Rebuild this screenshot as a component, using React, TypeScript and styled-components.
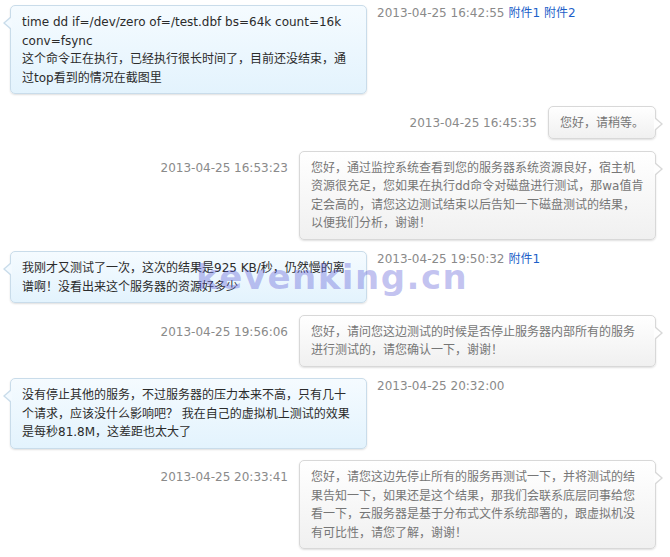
import React from 'react';
import styled, { createGlobalStyle, css } from 'styled-components';

const Global = createGlobalStyle`
  html, body { margin: 0; padding: 0; background: #fff; }
  body { font-family: "DejaVu Sans", "Noto Sans CJK SC", sans-serif; }
`;

type Side = 'left' | 'right';

interface Msg {
  side: Side;
  time: string;
  lines: string[];
  links?: string[];
  fit?: boolean;
}

const messages: Msg[] = [
  {
    side: 'left',
    time: '2013-04-25 16:42:55',
    links: ['附件1', '附件2'],
    lines: [
      'time dd if=/dev/zero of=/test.dbf bs=64k count=16k',
      'conv=fsync',
      '这个命令正在执行，已经执行很长时间了，目前还没结束，通',
      '过top看到的情况在截图里',
    ],
  },
  { side: 'right', time: '2013-04-25 16:45:35', fit: true, lines: ['您好，请稍等。'] },
  {
    side: 'right',
    time: '2013-04-25 16:53:23',
    lines: [
      '您好，通过监控系统查看到您的服务器系统资源良好，宿主机',
      '资源很充足，您如果在执行dd命令对磁盘进行测试，那wa值肯',
      '定会高的，请您这边测试结束以后告知一下磁盘测试的结果，',
      '以便我们分析，谢谢！',
    ],
  },
  {
    side: 'left',
    time: '2013-04-25 19:50:32',
    links: ['附件1'],
    lines: ['我刚才又测试了一次，这次的结果是925 KB/秒，仍然慢的离', '谱啊！没看出来这个服务器的资源好多少'],
  },
  {
    side: 'right',
    time: '2013-04-25 19:56:06',
    lines: ['您好，请问您这边测试的时候是否停止服务器内部所有的服务', '进行测试的，请您确认一下，谢谢！'],
  },
  {
    side: 'left',
    time: '2013-04-25 20:32:00',
    lines: [
      '没有停止其他的服务，不过服务器的压力本来不高，只有几十',
      '个请求，应该没什么影响吧？ 我在自己的虚拟机上测试的效果',
      '是每秒81.8M，这差距也太大了',
    ],
  },
  {
    side: 'right',
    time: '2013-04-25 20:33:41',
    lines: [
      '您好，请您这边先停止所有的服务再测试一下，并将测试的结',
      '果告知一下，如果还是这个结果，那我们会联系底层同事给您',
      '看一下，云服务器是基于分布式文件系统部署的，跟虚拟机没',
      '有可比性，请您了解，谢谢！',
    ],
  },
];

const Page = styled.div`
  position: relative;
  width: 670px;
  height: 557px;
  overflow: hidden;
  box-sizing: border-box;
  padding: 5px 14px 0 10px;
  display: flex;
  flex-direction: column;
  gap: 11.5px;
`;

const Row = styled.div<{ $side: Side }>`
  display: flex;
  align-items: flex-start;
  justify-content: ${(p) => (p.$side === 'left' ? 'flex-start' : 'flex-end')};
  gap: ${(p) => (p.$side === 'left' ? '10px' : '11px')};
`;

const Time = styled.div<{ $side: Side }>`
  font-size: 12px;
  line-height: 14px;
  color: #8a8a8a;
  white-space: nowrap;
  padding-top: ${(p) => (p.$side === 'left' ? '1px' : '10px')};
`;

const Attach = styled.a`
  color: #1d5fc9;
  text-decoration: none;
  margin-left: 4px;
  cursor: pointer;
`;

const leftStyle = css`
  color: #2b2b2b;
  border-color: #c9dcea;
  background: linear-gradient(to bottom, #f5fbff 0%, #e3f3fd 100%);
  &::before {
    left: -8px;
    border-width: 7px 8px 7px 0;
    border-color: transparent #c9dcea transparent transparent;
  }
  &::after {
    left: -6px;
    top: 11px;
    border-width: 6px 7px 6px 0;
    border-color: transparent #f3faff transparent transparent;
  }
`;

const rightStyle = css`
  color: #767676;
  border-color: #d8d8d8;
  background: linear-gradient(to bottom, #ffffff 0%, #f0f0f0 100%);
  &::before {
    right: -8px;
    border-width: 7px 0 7px 8px;
    border-color: transparent transparent transparent #d8d8d8;
  }
  &::after {
    right: -6px;
    top: 11px;
    border-width: 6px 0 6px 7px;
    border-color: transparent transparent transparent #fefefe;
  }
`;

const Bubble = styled.div<{ $side: Side; $fit?: boolean }>`
  position: relative;
  box-sizing: border-box;
  width: ${(p) => (p.$fit ? 'auto' : '357px')};
  padding: 7px 11px 6px;
  border: 1px solid;
  border-radius: 5px;
  box-shadow: 0 1px 2px rgba(0, 0, 0, 0.13);
  font-size: 12px;
  line-height: 18.5px;
  &::before,
  &::after {
    content: '';
    position: absolute;
    top: 10px;
    width: 0;
    height: 0;
    border-style: solid;
  }
  ${(p) => (p.$side === 'left' ? leftStyle : rightStyle)}
`;

const Line = styled.span`
  display: block;
  white-space: nowrap;
`;

const Watermark = styled.div`
  position: absolute;
  left: 196px;
  top: 260px;
  font-family: "DejaVu Sans", Verdana, sans-serif;
  font-weight: 700;
  font-size: 34px;
  line-height: 34px;
  letter-spacing: 1.5px;
  color: rgba(95, 95, 215, 0.38);
  pointer-events: none;
  white-space: nowrap;
`;

function Message({ m }: { m: Msg }) {
  const bubble = (
    <Bubble $side={m.side} $fit={m.fit}>
      {m.lines.map((l, i) => (
        <Line key={i}>{l}</Line>
      ))}
    </Bubble>
  );
  const time = (
    <Time $side={m.side}>
      {m.time}
      {m.links?.map((a) => (
        <Attach key={a}>{a}</Attach>
      ))}
    </Time>
  );
  return (
    <Row $side={m.side}>
      {m.side === 'left' ? (
        <>
          {bubble}
          {time}
        </>
      ) : (
        <>
          {time}
          {bubble}
        </>
      )}
    </Row>
  );
}

export default function App() {
  return (
    <>
      <Global />
      <Page>
        {messages.map((m, i) => (
          <Message key={i} m={m} />
        ))}
        <Watermark>kevenking.cn</Watermark>
      </Page>
    </>
  );
}
